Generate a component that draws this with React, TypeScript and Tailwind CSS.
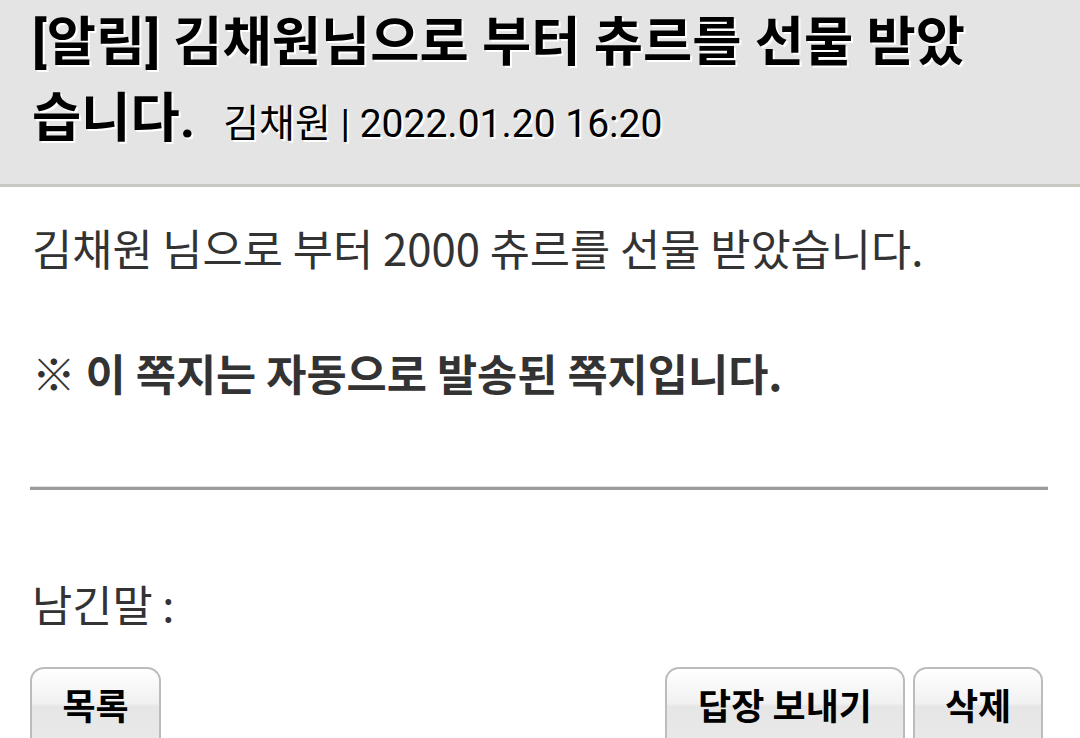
import React from 'react';

const btn =
  "h-[80px] rounded-t-[14px] border-2 border-b-0 border-[#bcbcbc] bg-[linear-gradient(#ffffff,#f1f1f1_44%,#e6e6e6_48%,#e9e9e9)] text-[36px] font-bold text-black flex items-center justify-center pb-[8px]";

export default function App() {
  return (
    <div className="w-[1080px] h-[738px] overflow-hidden bg-white [font-family:'Noto_Sans_CJK_KR',sans-serif]">
      {/* header */}
      <div className="h-[187px] bg-[#e4e4e4] border-b-[3px] border-[#c9c8c1] px-[32px] pt-[5px]">
        <h1 className="w-[965px] text-[53.5px] leading-[76px] font-bold text-black [text-shadow:2px_2px_0_#fff] [font-family:Roboto,'Noto_Sans_CJK_KR',sans-serif]">
          [알림] 김채원님으로 부터 츄르를 선물 받았습니다.
          <span className="ml-[28px] text-[39px] font-normal">김채원 | 2022.01.20 16:20</span>
        </h1>
      </div>

      {/* body */}
      <div className="px-[32px] pt-[30px] text-[#333] text-[43.7px] leading-[60px]">
        <p>김채원 님으로 부터 2000 츄르를 선물 받았습니다.</p>
        <p className="mt-[65px] font-bold">※ 이 쪽지는 자동으로 발송된 쪽지입니다.</p>
      </div>
      <div className="ml-[30px] mr-[32px] mt-[84px] h-[4px] border-t border-[#e2e2e2] bg-[#9c9c9c]" />
      <div className="px-[32px] mt-[83px] text-[#333] text-[43.7px] leading-[60px]">남긴말 :</div>

      {/* buttons */}
      <div className="mt-[34px] pl-[30px] pr-[37px] flex">
        <button className={btn + " w-[131px]"}>목록</button>
        <div className="flex-1" />
        <div className="flex gap-[8px]">
          <button className={btn + " w-[240px]"}>답장 보내기</button>
          <button className={btn + " w-[130px]"}>삭제</button>
        </div>
      </div>
    </div>
  );
}
